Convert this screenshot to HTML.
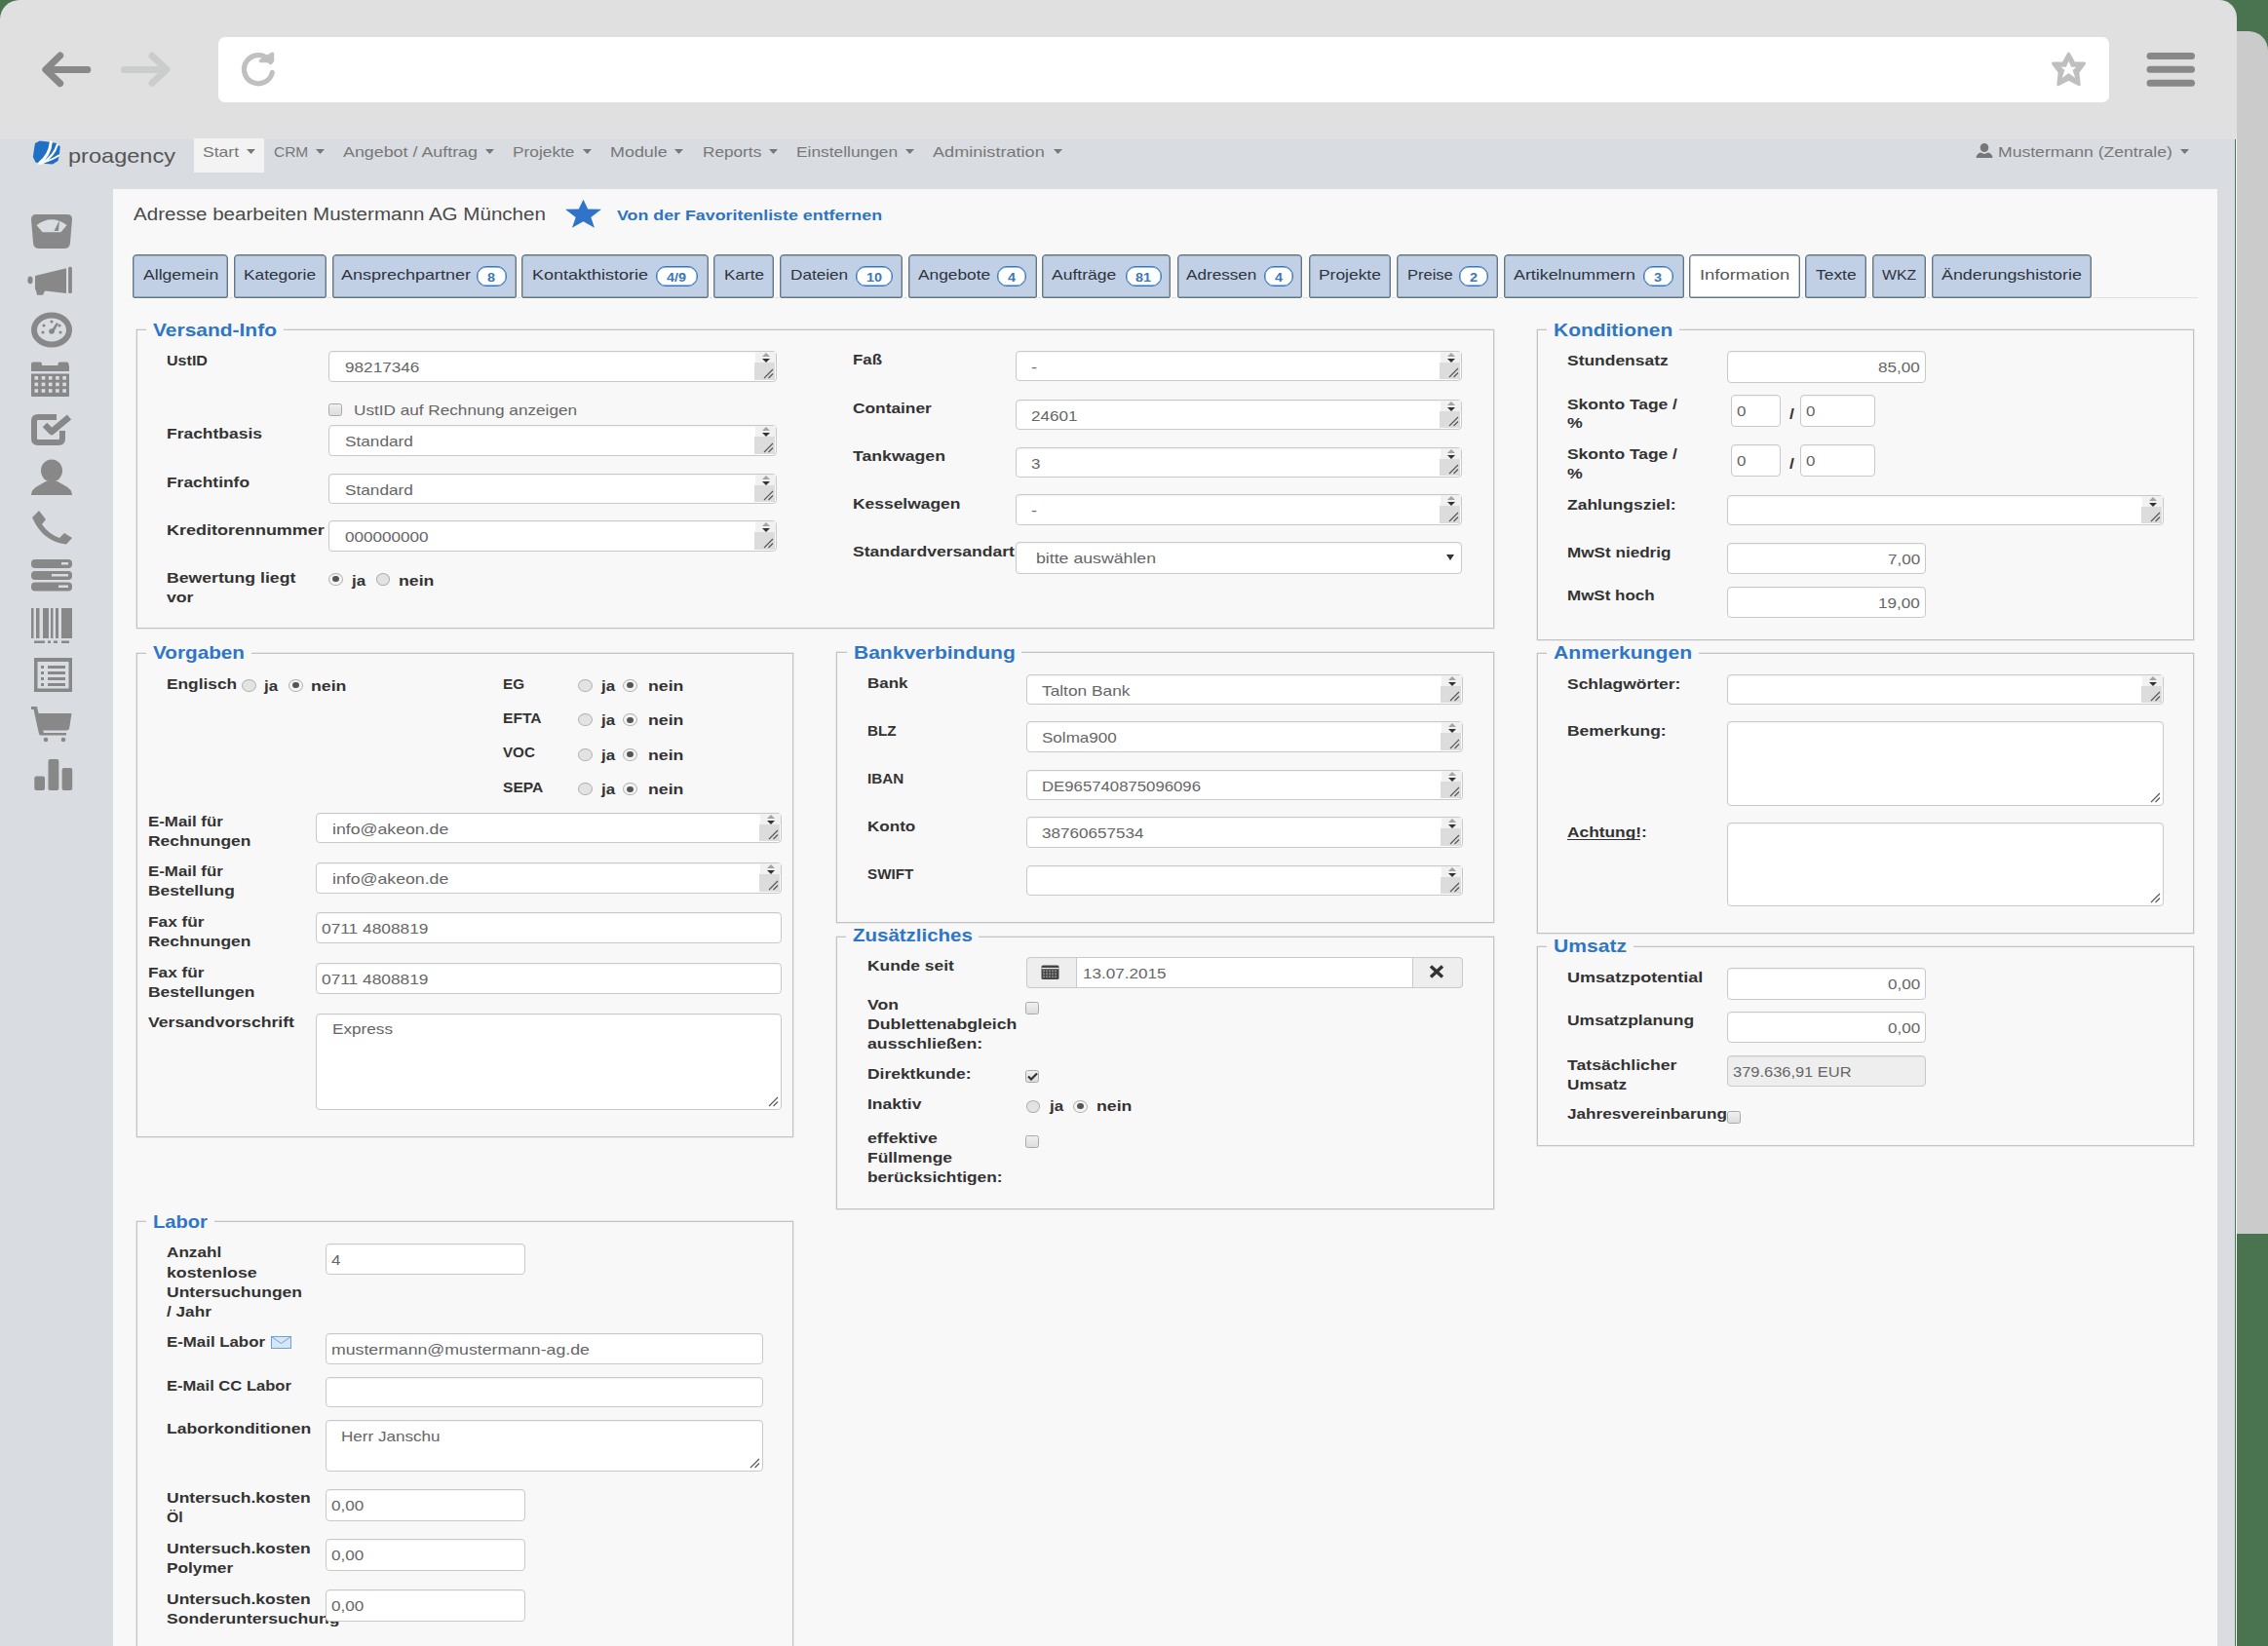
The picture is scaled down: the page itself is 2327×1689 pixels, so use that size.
<!DOCTYPE html><html><head><meta charset="utf-8"><style>
html,body{margin:0;padding:0;width:2327px;height:1689px;overflow:hidden;background:#4a7350}
body{position:relative;font-family:"Liberation Sans",sans-serif}
.t{position:absolute;white-space:nowrap;transform-origin:0 0}
</style></head><body>
<div style="position:absolute;left:0;top:0;width:2327px;height:1689px;background:#4a7350"></div>
<div style="position:absolute;left:2200px;top:32px;width:127px;height:1234px;background:#cbcbcb;border-top-right-radius:20px"></div>
<div style="position:absolute;left:0;top:0;width:2295px;height:1689px;background:#e0e0e0;border-top-left-radius:20px;border-top-right-radius:18px"></div>
<div style="position:absolute;left:0px;top:143px;width:2293px;height:1546px;background:#d9dce1"></div>
<div style="position:absolute;left:2293px;top:143px;width:1px;height:1546px;background:#4a7350"></div>
<div style="position:absolute;left:2294px;top:143px;width:1px;height:1546px;background:#f4f4f4"></div>
<div style="position:absolute;left:224px;top:38px;width:1940px;height:67px;background:#fff;border-radius:7px"></div>
<svg style="position:absolute;left:0;top:0" width="2327" height="143">
<g fill="none" stroke-linecap="round" stroke-linejoin="round">
<path d="M89.8,71.4 H48 M61.7,57 L46.8,71.4 L61.7,85.6" stroke="#888" stroke-width="7"/>
<path d="M127.5,71.4 H170 M156,57.3 L171,71.4 L156,85.3" stroke="#cbcccc" stroke-width="7"/>
<path d="M277.5,63.5 A14.6,14.6 0 1 0 279.3,74.5" stroke="#c0c0c0" stroke-width="5.2"/>
</g>
<path d="M267.5,62.5 L279.5,62.5 L279.5,55.2 Z" fill="#c0c0c0" stroke="#c0c0c0" stroke-width="3.5" stroke-linejoin="round"/>
<path d="M2122.5,55 L2127.8,64.8 L2138.5,65 L2131.8,74 L2133.2,86.6 L2122.5,81.2 L2111.8,86.6 L2113.2,74 L2106.5,65 L2117.2,64.8 Z" fill="#bfbfbf" stroke="#bfbfbf" stroke-width="3" stroke-linejoin="round"/>
<path d="M2122.5,62.7 L2125.1,68.7 L2130.4,68.7 L2126.6,71.9 L2129.3,80.1 L2122.5,75.1 L2115.7,80.1 L2118.4,71.9 L2114.6,68.7 L2119.9,68.7 Z" fill="#fff"/>
<rect x="2202.5" y="54" width="49.5" height="7" rx="3.5" fill="#888"/>
<rect x="2202.5" y="67.7" width="49.5" height="7" rx="3.5" fill="#888"/>
<rect x="2202.5" y="81.7" width="49.5" height="7" rx="3.5" fill="#888"/>
</svg>
<svg style="position:absolute;left:28px;top:140px" width="40" height="34" viewBox="0 0 40 34">
<path d="M8,7 L13,4.6 L23,5.8 L30,7 L33.8,10.5 L32.5,21 L31.5,25 L26,28.6 L12,27.5 L8.5,26.5 L5.8,21 Z" fill="#1f70c4"/>
<g fill="none" stroke="#fff" stroke-linecap="round">
<path d="M24.3,6 C23.5,14 19.5,22 12.5,27.5" stroke-width="3"/>
<path d="M30.8,8.5 C28.5,16 23.5,22.5 15.5,27.2" stroke-width="2.3"/>
<path d="M32.3,19.5 C28,22.5 22,25 14.5,27.3" stroke-width="2.1"/>
</g>
</svg>
<div class="t" style="left:70.20px;top:148px;font-size:21px;line-height:23px;font-weight:normal;color:#555;transform:scaleX(1.1216);">proagency</div>
<div style="position:absolute;left:199px;top:142px;width:72px;height:34.5px;background:#f3f3f3"></div>
<div class="t" style="left:208.00px;top:147px;font-size:15px;line-height:17px;font-weight:normal;color:#777;transform:scaleX(1.1690);">Start</div>
<svg style="position:absolute;left:253px;top:153px" width="9" height="5"><path d="M0,0 H9 L4.5,5Z" fill="#777"/></svg>
<div class="t" style="left:280.70px;top:147px;font-size:15px;line-height:17px;font-weight:normal;color:#777;transform:scaleX(1.0322);">CRM</div>
<svg style="position:absolute;left:323.5px;top:153px" width="9" height="5"><path d="M0,0 H9 L4.5,5Z" fill="#777"/></svg>
<div class="t" style="left:352.00px;top:147px;font-size:15px;line-height:17px;font-weight:normal;color:#777;transform:scaleX(1.1902);">Angebot / Auftrag</div>
<svg style="position:absolute;left:497.6px;top:153px" width="9" height="5"><path d="M0,0 H9 L4.5,5Z" fill="#777"/></svg>
<div class="t" style="left:526.00px;top:147px;font-size:15px;line-height:17px;font-weight:normal;color:#777;transform:scaleX(1.1535);">Projekte</div>
<svg style="position:absolute;left:598px;top:153px" width="9" height="5"><path d="M0,0 H9 L4.5,5Z" fill="#777"/></svg>
<div class="t" style="left:626.00px;top:147px;font-size:15px;line-height:17px;font-weight:normal;color:#777;transform:scaleX(1.1951);">Module</div>
<svg style="position:absolute;left:692px;top:153px" width="9" height="5"><path d="M0,0 H9 L4.5,5Z" fill="#777"/></svg>
<div class="t" style="left:720.80px;top:147px;font-size:15px;line-height:17px;font-weight:normal;color:#777;transform:scaleX(1.1467);">Reports</div>
<svg style="position:absolute;left:789px;top:153px" width="9" height="5"><path d="M0,0 H9 L4.5,5Z" fill="#777"/></svg>
<div class="t" style="left:817.00px;top:147px;font-size:15px;line-height:17px;font-weight:normal;color:#777;transform:scaleX(1.1556);">Einstellungen</div>
<svg style="position:absolute;left:929.4px;top:153px" width="9" height="5"><path d="M0,0 H9 L4.5,5Z" fill="#777"/></svg>
<div class="t" style="left:957.00px;top:147px;font-size:15px;line-height:17px;font-weight:normal;color:#777;transform:scaleX(1.2072);">Administration</div>
<svg style="position:absolute;left:1080.7px;top:153px" width="9" height="5"><path d="M0,0 H9 L4.5,5Z" fill="#777"/></svg>
<svg style="position:absolute;left:2027px;top:147px" width="18" height="15" viewBox="0 0 18 15">
<ellipse cx="9" cy="4.5" rx="4.3" ry="4.5" fill="#777"/><path d="M0.5,15 Q1,10.5 5,9.5 L9,11 L13,9.5 Q17,10.5 17.5,15Z" fill="#777"/></svg>
<div class="t" style="left:2049.70px;top:147px;font-size:15px;line-height:17px;font-weight:normal;color:#777;transform:scaleX(1.1727);">Mustermann (Zentrale)</div>
<svg style="position:absolute;left:2237px;top:153px" width="9" height="5"><path d="M0,0 H9 L4.5,5Z" fill="#777"/></svg>
<svg style="position:absolute;left:0;top:200px" width="116" height="620" viewBox="0 200 116 620">
<g fill="#888">
<path d="M37,220 H69 Q74,220 74,225 L72,249 Q71.5,255 66,255 H40 Q34.5,255 34,249 L32,225 Q32,220 37,220Z"/>
<path d="M37.5,231 Q53,219.5 68.6,231 L62.5,238.2 H43.6 Z" fill="#d9dce1"/>
<path d="M55.5,237 L61,226 L60,237Z"/>
<ellipse cx="31" cy="287.4" rx="2.6" ry="3.8"/>
<path d="M36,283 L68,275.3 L68,301 L36,297.3Z"/>
<path d="M36.5,296 L46.5,297.5 L44,302.8 L38,302.8Z"/>
<rect x="70.1" y="273.8" width="3.8" height="27.3" rx="1.5"/>
<ellipse cx="53" cy="338.5" rx="18" ry="15" fill="none" stroke="#888" stroke-width="6"/>
<circle cx="53" cy="340" r="2.8"/><path d="M52,340 L58,331 L60,332 L55,341Z"/>
<circle cx="45" cy="334" r="1.6"/><circle cx="53" cy="330" r="1.6"/><circle cx="61" cy="334" r="1.6"/><circle cx="44" cy="341" r="1.6"/><circle cx="62" cy="341" r="1.6"/>
<rect x="32" y="375" width="39" height="32" rx="1"/>
<rect x="32" y="371.5" width="11" height="6" rx="2"/><rect x="59.5" y="371.5" width="11" height="6" rx="2"/>
</g>
<g fill="#d9dce1">
<rect x="32" y="381" width="39" height="2.5"/>
<rect x="35.5" y="386.0" width="3.6" height="3.6"/><rect x="42.7" y="386.0" width="3.6" height="3.6"/><rect x="49.9" y="386.0" width="3.6" height="3.6"/><rect x="57.1" y="386.0" width="3.6" height="3.6"/><rect x="64.3" y="386.0" width="3.6" height="3.6"/><rect x="35.5" y="392.6" width="3.6" height="3.6"/><rect x="42.7" y="392.6" width="3.6" height="3.6"/><rect x="49.9" y="392.6" width="3.6" height="3.6"/><rect x="57.1" y="392.6" width="3.6" height="3.6"/><rect x="64.3" y="392.6" width="3.6" height="3.6"/><rect x="35.5" y="399.2" width="3.6" height="3.6"/><rect x="42.7" y="399.2" width="3.6" height="3.6"/><rect x="49.9" y="399.2" width="3.6" height="3.6"/><rect x="57.1" y="399.2" width="3.6" height="3.6"/><rect x="64.3" y="399.2" width="3.6" height="3.6"/>
</g>
<g fill="none" stroke="#888" stroke-width="6" stroke-linejoin="round">
<path d="M64,442 V450 Q64,454 60,454 H39 Q35,454 35,450 V432 Q35,428 39,428 H58"/>
<path d="M46,436 L53,443 L71,428" stroke-width="6.5"/>
</g>
<g fill="#888">
<ellipse cx="53" cy="483" rx="11" ry="11.5"/>
<path d="M32,508 Q32,502 40,498 L47,494 H59 L66,498 Q74,502 74,508Z"/>
<path d="M33,531 L40,524 L47,533 L43,538 Q50,548 61,552 L66,547 L74,552 L68,558.5 Q44,556 33,531Z"/>
<rect x="32" y="574" width="42" height="9" rx="4"/><rect x="32" y="586" width="42" height="9" rx="4"/><rect x="32" y="597.5" width="42" height="9" rx="4"/>
</g>
<g fill="#d9dce1"><rect x="63" y="577" width="7" height="2.5"/><rect x="53" y="589" width="17" height="2.5"/><rect x="60" y="600.5" width="10" height="2.5"/></g>
<g fill="#888">
<rect x="32" y="624" width="2.5" height="31"/><rect x="37" y="624" width="3.5" height="31"/><rect x="44" y="624" width="6" height="31"/><rect x="52" y="624" width="2.5" height="31"/><rect x="57" y="624" width="3" height="31"/><rect x="63" y="624" width="11" height="31"/>
<rect x="35" y="657.5" width="11" height="2.5"/><rect x="49" y="657.5" width="3" height="2.5"/><rect x="55" y="657.5" width="4" height="2.5"/><rect x="63" y="657.5" width="8" height="2.5"/>
<path d="M35,675 H74 V710 H35Z M38.5,679 V706.5 H70.5 V679Z" fill-rule="evenodd"/>
<rect x="42" y="683" width="3" height="3"/><rect x="49" y="683" width="18" height="3"/>
<rect x="42" y="689" width="3" height="3"/><rect x="49" y="689" width="18" height="3"/>
<rect x="42" y="695" width="3" height="3"/><rect x="49" y="695" width="18" height="3"/>
<rect x="42" y="701" width="3" height="3"/><rect x="49" y="701" width="18" height="3"/>
<path d="M32,725 H38 L39.5,732 H73.5 L71,748 Q70,749.5 68,749.5 H44 L45,752 H68 V754.5 H42 Q40.5,754.5 40,753 L34.5,728 H32Z"/>
<circle cx="47" cy="759" r="2.3"/><circle cx="65" cy="759" r="2.3"/>
<rect x="35.3" y="796.5" width="10.7" height="14.5" rx="2"/><rect x="49.5" y="779" width="10.8" height="32" rx="2"/><rect x="63.6" y="788" width="10.6" height="23" rx="2"/>
</g>
</svg>
<div style="position:absolute;left:116px;top:194px;width:2159px;height:1495px;background:#f8f8f8"></div>
<div class="t" style="left:137.00px;top:210px;font-size:18px;line-height:20px;font-weight:normal;color:#4a4a4a;transform:scaleX(1.1424);">Adresse bearbeiten Mustermann AG München</div>
<svg style="position:absolute;left:578px;top:204px" width="40" height="32" viewBox="0 0 40 32">
<path d="M20.5,0.8 L25.2,10.6 L39,10.8 L28.3,19 L32,29.8 L20.5,23.2 L9,29.8 L12.7,19 L2,10.8 L15.8,10.6Z" fill="#2f74c8"/></svg>
<div class="t" style="left:633.00px;top:212px;font-size:15px;line-height:17px;font-weight:bold;color:#2f74c0;transform:scaleX(1.1883);">Von der Favoritenliste entfernen</div>
<div style="position:absolute;left:136px;top:305px;width:2119px;height:1px;background:#dedede"></div>
<div style="position:absolute;left:136px;top:261px;width:96px;height:43px;background:#c1d0e5;border:1px solid #62768a;border-radius:4px 4px 2px 2px;box-shadow:0 0 0 1px #fff, inset 0 0 0 0.4px #62768a"></div>
<div class="t" style="left:147.00px;top:273px;font-size:15px;line-height:17px;font-weight:normal;color:#2d3440;transform:scaleX(1.1724);">Allgemein</div>
<div style="position:absolute;left:240px;top:261px;width:93px;height:43px;background:#c1d0e5;border:1px solid #62768a;border-radius:4px 4px 2px 2px;box-shadow:0 0 0 1px #fff, inset 0 0 0 0.4px #62768a"></div>
<div class="t" style="left:250.00px;top:273px;font-size:15px;line-height:17px;font-weight:normal;color:#2d3440;transform:scaleX(1.1526);">Kategorie</div>
<div style="position:absolute;left:341px;top:261px;width:187px;height:43px;background:#c1d0e5;border:1px solid #62768a;border-radius:4px 4px 2px 2px;box-shadow:0 0 0 1px #fff, inset 0 0 0 0.4px #62768a"></div>
<div class="t" style="left:350.00px;top:273px;font-size:15px;line-height:17px;font-weight:normal;color:#2d3440;transform:scaleX(1.1998);">Ansprechpartner</div>
<div style="position:absolute;left:489.0px;top:272.5px;width:29.0px;height:19px;background:#fff;border:1px solid #3576bb;border-radius:10px;box-shadow:inset 0 0 0 0.4px #3576bb"></div>
<div class="t" style="left:500.48px;top:278px;font-size:12.5px;line-height:14px;font-weight:bold;color:#3a78b8;transform:scaleX(1.1500);">8</div>
<div style="position:absolute;left:535px;top:261px;width:190px;height:43px;background:#c1d0e5;border:1px solid #62768a;border-radius:4px 4px 2px 2px;box-shadow:0 0 0 1px #fff, inset 0 0 0 0.4px #62768a"></div>
<div class="t" style="left:545.50px;top:273px;font-size:15px;line-height:17px;font-weight:normal;color:#2d3440;transform:scaleX(1.1992);">Kontakthistorie</div>
<div style="position:absolute;left:672.5px;top:272.5px;width:41.7px;height:19px;background:#fff;border:1px solid #3576bb;border-radius:10px;box-shadow:inset 0 0 0 0.4px #3576bb"></div>
<div class="t" style="left:684.36px;top:278px;font-size:12.5px;line-height:14px;font-weight:bold;color:#3a78b8;transform:scaleX(1.1500);">4/9</div>
<div style="position:absolute;left:732px;top:261px;width:60px;height:43px;background:#c1d0e5;border:1px solid #62768a;border-radius:4px 4px 2px 2px;box-shadow:0 0 0 1px #fff, inset 0 0 0 0.4px #62768a"></div>
<div class="t" style="left:742.70px;top:273px;font-size:15px;line-height:17px;font-weight:normal;color:#2d3440;transform:scaleX(1.1409);">Karte</div>
<div style="position:absolute;left:800px;top:261px;width:124px;height:43px;background:#c1d0e5;border:1px solid #62768a;border-radius:4px 4px 2px 2px;box-shadow:0 0 0 1px #fff, inset 0 0 0 0.4px #62768a"></div>
<div class="t" style="left:810.80px;top:273px;font-size:15px;line-height:17px;font-weight:normal;color:#2d3440;transform:scaleX(1.1440);">Dateien</div>
<div style="position:absolute;left:877.8px;top:272.5px;width:36.1px;height:19px;background:#fff;border:1px solid #3576bb;border-radius:10px;box-shadow:inset 0 0 0 0.4px #3576bb"></div>
<div class="t" style="left:888.87px;top:278px;font-size:12.5px;line-height:14px;font-weight:bold;color:#3a78b8;transform:scaleX(1.1500);">10</div>
<div style="position:absolute;left:932px;top:261px;width:130px;height:43px;background:#c1d0e5;border:1px solid #62768a;border-radius:4px 4px 2px 2px;box-shadow:0 0 0 1px #fff, inset 0 0 0 0.4px #62768a"></div>
<div class="t" style="left:941.90px;top:273px;font-size:15px;line-height:17px;font-weight:normal;color:#2d3440;transform:scaleX(1.1542);">Angebote</div>
<div style="position:absolute;left:1023.4px;top:272.5px;width:27.9px;height:19px;background:#fff;border:1px solid #3576bb;border-radius:10px;box-shadow:inset 0 0 0 0.4px #3576bb"></div>
<div class="t" style="left:1034.32px;top:278px;font-size:12.5px;line-height:14px;font-weight:bold;color:#3a78b8;transform:scaleX(1.1500);">4</div>
<div style="position:absolute;left:1069px;top:261px;width:130px;height:43px;background:#c1d0e5;border:1px solid #62768a;border-radius:4px 4px 2px 2px;box-shadow:0 0 0 1px #fff, inset 0 0 0 0.4px #62768a"></div>
<div class="t" style="left:1079.40px;top:273px;font-size:15px;line-height:17px;font-weight:normal;color:#2d3440;transform:scaleX(1.1693);">Aufträge</div>
<div style="position:absolute;left:1154.6px;top:272.5px;width:35.0px;height:19px;background:#fff;border:1px solid #3576bb;border-radius:10px;box-shadow:inset 0 0 0 0.4px #3576bb"></div>
<div class="t" style="left:1165.12px;top:278px;font-size:12.5px;line-height:14px;font-weight:bold;color:#3a78b8;transform:scaleX(1.1500);">81</div>
<div style="position:absolute;left:1208px;top:261px;width:126px;height:43px;background:#c1d0e5;border:1px solid #62768a;border-radius:4px 4px 2px 2px;box-shadow:0 0 0 1px #fff, inset 0 0 0 0.4px #62768a"></div>
<div class="t" style="left:1217.40px;top:273px;font-size:15px;line-height:17px;font-weight:normal;color:#2d3440;transform:scaleX(1.1422);">Adressen</div>
<div style="position:absolute;left:1297.4px;top:272.5px;width:27.3px;height:19px;background:#fff;border:1px solid #3576bb;border-radius:10px;box-shadow:inset 0 0 0 0.4px #3576bb"></div>
<div class="t" style="left:1308.03px;top:278px;font-size:12.5px;line-height:14px;font-weight:bold;color:#3a78b8;transform:scaleX(1.1500);">4</div>
<div style="position:absolute;left:1343px;top:261px;width:82px;height:43px;background:#c1d0e5;border:1px solid #62768a;border-radius:4px 4px 2px 2px;box-shadow:0 0 0 1px #fff, inset 0 0 0 0.4px #62768a"></div>
<div class="t" style="left:1352.80px;top:273px;font-size:15px;line-height:17px;font-weight:normal;color:#2d3440;transform:scaleX(1.1608);">Projekte</div>
<div style="position:absolute;left:1433px;top:261px;width:102px;height:43px;background:#c1d0e5;border:1px solid #62768a;border-radius:4px 4px 2px 2px;box-shadow:0 0 0 1px #fff, inset 0 0 0 0.4px #62768a"></div>
<div class="t" style="left:1443.80px;top:273px;font-size:15px;line-height:17px;font-weight:normal;color:#2d3440;transform:scaleX(1.0978);">Preise</div>
<div style="position:absolute;left:1497.4px;top:272.5px;width:27.3px;height:19px;background:#fff;border:1px solid #3576bb;border-radius:10px;box-shadow:inset 0 0 0 0.4px #3576bb"></div>
<div class="t" style="left:1508.03px;top:278px;font-size:12.5px;line-height:14px;font-weight:bold;color:#3a78b8;transform:scaleX(1.1500);">2</div>
<div style="position:absolute;left:1543px;top:261px;width:183px;height:43px;background:#c1d0e5;border:1px solid #62768a;border-radius:4px 4px 2px 2px;box-shadow:0 0 0 1px #fff, inset 0 0 0 0.4px #62768a"></div>
<div class="t" style="left:1553.20px;top:273px;font-size:15px;line-height:17px;font-weight:normal;color:#2d3440;transform:scaleX(1.1886);">Artikelnummern</div>
<div style="position:absolute;left:1686.0px;top:272.5px;width:29.0px;height:19px;background:#fff;border:1px solid #3576bb;border-radius:10px;box-shadow:inset 0 0 0 0.4px #3576bb"></div>
<div class="t" style="left:1697.47px;top:278px;font-size:12.5px;line-height:14px;font-weight:bold;color:#3a78b8;transform:scaleX(1.1500);">3</div>
<div style="position:absolute;left:1733px;top:261px;width:112px;height:43px;background:#fff;border:1px solid #62768a;border-radius:4px 4px 2px 2px;box-shadow:0 0 0 1px #fff, inset 0 0 0 0.4px #62768a"></div>
<div class="t" style="left:1744.20px;top:273px;font-size:15px;line-height:17px;font-weight:normal;color:#555;transform:scaleX(1.2280);">Information</div>
<div style="position:absolute;left:1852px;top:261px;width:61px;height:43px;background:#c1d0e5;border:1px solid #62768a;border-radius:4px 4px 2px 2px;box-shadow:0 0 0 1px #fff, inset 0 0 0 0.4px #62768a"></div>
<div class="t" style="left:1863.00px;top:273px;font-size:15px;line-height:17px;font-weight:normal;color:#2d3440;transform:scaleX(1.1604);">Texte</div>
<div style="position:absolute;left:1921px;top:261px;width:53px;height:43px;background:#c1d0e5;border:1px solid #62768a;border-radius:4px 4px 2px 2px;box-shadow:0 0 0 1px #fff, inset 0 0 0 0.4px #62768a"></div>
<div class="t" style="left:1930.90px;top:273px;font-size:15px;line-height:17px;font-weight:normal;color:#2d3440;transform:scaleX(1.0541);">WKZ</div>
<div style="position:absolute;left:1982px;top:261px;width:162px;height:43px;background:#c1d0e5;border:1px solid #62768a;border-radius:4px 4px 2px 2px;box-shadow:0 0 0 1px #fff, inset 0 0 0 0.4px #62768a"></div>
<div class="t" style="left:1992.20px;top:273px;font-size:15px;line-height:17px;font-weight:normal;color:#2d3440;transform:scaleX(1.1894);">Änderungshistorie</div>
<div style="position:absolute;left:140px;top:338px;width:1391px;height:305px;border:1px solid #c4c4c4;box-shadow:0 0 0 0.5px #d8d8d8"></div>
<div style="position:absolute;left:150px;top:335px;width:141px;height:7px;background:#f8f8f8"></div>
<div class="t" style="left:157.00px;top:328px;font-size:18.5px;line-height:21px;font-weight:bold;color:#2f76c6;transform:scaleX(1.1328);">Versand-Info</div>
<div class="t" style="left:171.00px;top:361.4px;font-size:15px;line-height:17px;font-weight:bold;color:#333;transform:scaleX(1.0707);">UstID</div>
<div class="t" style="left:171.00px;top:436.4px;font-size:15px;line-height:17px;font-weight:bold;color:#333;transform:scaleX(1.1633);">Frachtbasis</div>
<div class="t" style="left:171.00px;top:486px;font-size:15px;line-height:17px;font-weight:bold;color:#333;transform:scaleX(1.1596);">Frachtinfo</div>
<div class="t" style="left:171.00px;top:534.6px;font-size:15px;line-height:17px;font-weight:bold;color:#333;transform:scaleX(1.1985);">Kreditorennummer</div>
<div class="t" style="left:171.00px;top:584px;font-size:15px;line-height:17px;font-weight:bold;color:#333;transform:scaleX(1.1760);">Bewertung liegt</div>
<div class="t" style="left:171.00px;top:604px;font-size:15px;line-height:17px;font-weight:bold;color:#333;transform:scaleX(1.1780);">vor</div>
<div style="position:absolute;left:337px;top:360px;width:458px;height:30px;background:#fff;border:1px solid #c9c9c9;border-radius:4px;box-shadow:inset 0 1px 1px rgba(0,0,0,.05)"></div>
<div style="position:absolute;left:775px;top:361px;width:21px;height:11px;background:#f1f1f1"></div>
<svg style="position:absolute;left:782px;top:362px" width="8" height="10"><path d="M0,4 L4,0 L8,4Z" fill="#a3a3a3"/><path d="M0,6 L8,6 L4,10Z" fill="#333"/></svg>
<div style="position:absolute;left:774px;top:372px;width:21px;height:18px;background:#dcdcdc"></div>
<svg style="position:absolute;left:783px;top:378px" width="11" height="11"><path d="M1,10 L10,1 M5.5,10 L10,5.5" stroke="#555" stroke-width="1.1"/></svg>
<div class="t" style="left:353.50px;top:368.5px;font-size:14.5px;line-height:16px;font-weight:normal;color:#666;transform:scaleX(1.1840);">98217346</div>
<div style="position:absolute;left:336.8px;top:414.0px;width:12px;height:10.5px;background:linear-gradient(#f0f0f0,#dcdcdc);border:1px solid #a9a9a9;border-radius:2.5px"></div>
<div class="t" style="left:363.00px;top:412.7px;font-size:14.5px;line-height:16px;font-weight:normal;color:#666;transform:scaleX(1.1839);">UstID auf Rechnung anzeigen</div>
<div style="position:absolute;left:337px;top:436px;width:458px;height:30px;background:#fff;border:1px solid #c9c9c9;border-radius:4px;box-shadow:inset 0 1px 1px rgba(0,0,0,.05)"></div>
<div style="position:absolute;left:775px;top:437px;width:21px;height:11px;background:#f1f1f1"></div>
<svg style="position:absolute;left:782px;top:438px" width="8" height="10"><path d="M0,4 L4,0 L8,4Z" fill="#a3a3a3"/><path d="M0,6 L8,6 L4,10Z" fill="#333"/></svg>
<div style="position:absolute;left:774px;top:448px;width:21px;height:18px;background:#dcdcdc"></div>
<svg style="position:absolute;left:783px;top:454px" width="11" height="11"><path d="M1,10 L10,1 M5.5,10 L10,5.5" stroke="#555" stroke-width="1.1"/></svg>
<div class="t" style="left:353.50px;top:444.5px;font-size:14.5px;line-height:16px;font-weight:normal;color:#666;transform:scaleX(1.1866);">Standard</div>
<div style="position:absolute;left:337px;top:486px;width:458px;height:29px;background:#fff;border:1px solid #c9c9c9;border-radius:4px;box-shadow:inset 0 1px 1px rgba(0,0,0,.05)"></div>
<div style="position:absolute;left:775px;top:487px;width:21px;height:11px;background:#f1f1f1"></div>
<svg style="position:absolute;left:782px;top:488px" width="8" height="10"><path d="M0,4 L4,0 L8,4Z" fill="#a3a3a3"/><path d="M0,6 L8,6 L4,10Z" fill="#333"/></svg>
<div style="position:absolute;left:774px;top:498px;width:21px;height:17px;background:#dcdcdc"></div>
<svg style="position:absolute;left:783px;top:503px" width="11" height="11"><path d="M1,10 L10,1 M5.5,10 L10,5.5" stroke="#555" stroke-width="1.1"/></svg>
<div class="t" style="left:353.50px;top:494.5px;font-size:14.5px;line-height:16px;font-weight:normal;color:#666;transform:scaleX(1.1866);">Standard</div>
<div style="position:absolute;left:337px;top:534px;width:458px;height:30px;background:#fff;border:1px solid #c9c9c9;border-radius:4px;box-shadow:inset 0 1px 1px rgba(0,0,0,.05)"></div>
<div style="position:absolute;left:775px;top:535px;width:21px;height:11px;background:#f1f1f1"></div>
<svg style="position:absolute;left:782px;top:536px" width="8" height="10"><path d="M0,4 L4,0 L8,4Z" fill="#a3a3a3"/><path d="M0,6 L8,6 L4,10Z" fill="#333"/></svg>
<div style="position:absolute;left:774px;top:546px;width:21px;height:18px;background:#dcdcdc"></div>
<svg style="position:absolute;left:783px;top:552px" width="11" height="11"><path d="M1,10 L10,1 M5.5,10 L10,5.5" stroke="#555" stroke-width="1.1"/></svg>
<div class="t" style="left:353.50px;top:542.5px;font-size:14.5px;line-height:16px;font-weight:normal;color:#666;transform:scaleX(1.1791);">000000000</div>
<div style="position:absolute;left:337.4px;top:588.0px;width:12.5px;height:11px;background:#f4f4f4;border:1px solid #b0b0b0;border-radius:50%"></div>
<div style="position:absolute;left:341.4px;top:591.3px;width:6.5px;height:6px;background:#555;border-radius:50%"></div>
<div class="t" style="left:361.34px;top:587px;font-size:15px;line-height:17px;font-weight:bold;color:#333;transform:scaleX(1.1320);">ja</div>
<div style="position:absolute;left:385.5px;top:588.0px;width:12.5px;height:11px;background:#e3e3e3;border:1px solid #b0b0b0;border-radius:50%"></div>
<div class="t" style="left:409.00px;top:587px;font-size:15px;line-height:17px;font-weight:bold;color:#333;transform:scaleX(1.1784);">nein</div>
<div class="t" style="left:875.00px;top:360.4px;font-size:15px;line-height:17px;font-weight:bold;color:#333;transform:scaleX(1.1218);">Faß</div>
<div class="t" style="left:875.00px;top:410.3px;font-size:15px;line-height:17px;font-weight:bold;color:#333;transform:scaleX(1.1542);">Container</div>
<div class="t" style="left:875.00px;top:459px;font-size:15px;line-height:17px;font-weight:bold;color:#333;transform:scaleX(1.1785);">Tankwagen</div>
<div class="t" style="left:875.00px;top:508.4px;font-size:15px;line-height:17px;font-weight:bold;color:#333;transform:scaleX(1.1611);">Kesselwagen</div>
<div class="t" style="left:875.00px;top:556.7px;font-size:15px;line-height:17px;font-weight:bold;color:#333;transform:scaleX(1.1711);">Standardversandart</div>
<div style="position:absolute;left:1042px;top:360px;width:456px;height:29px;background:#fff;border:1px solid #c9c9c9;border-radius:4px;box-shadow:inset 0 1px 1px rgba(0,0,0,.05)"></div>
<div style="position:absolute;left:1478px;top:361px;width:21px;height:11px;background:#f1f1f1"></div>
<svg style="position:absolute;left:1485px;top:362px" width="8" height="10"><path d="M0,4 L4,0 L8,4Z" fill="#a3a3a3"/><path d="M0,6 L8,6 L4,10Z" fill="#333"/></svg>
<div style="position:absolute;left:1477px;top:372px;width:21px;height:17px;background:#dcdcdc"></div>
<svg style="position:absolute;left:1486px;top:377px" width="11" height="11"><path d="M1,10 L10,1 M5.5,10 L10,5.5" stroke="#555" stroke-width="1.1"/></svg>
<div class="t" style="left:1058.00px;top:368.5px;font-size:14.5px;line-height:16px;font-weight:normal;color:#666;transform:scaleX(1.2320);">-</div>
<div style="position:absolute;left:1042px;top:410px;width:456px;height:29px;background:#fff;border:1px solid #c9c9c9;border-radius:4px;box-shadow:inset 0 1px 1px rgba(0,0,0,.05)"></div>
<div style="position:absolute;left:1478px;top:411px;width:21px;height:11px;background:#f1f1f1"></div>
<svg style="position:absolute;left:1485px;top:412px" width="8" height="10"><path d="M0,4 L4,0 L8,4Z" fill="#a3a3a3"/><path d="M0,6 L8,6 L4,10Z" fill="#333"/></svg>
<div style="position:absolute;left:1477px;top:422px;width:21px;height:17px;background:#dcdcdc"></div>
<svg style="position:absolute;left:1486px;top:427px" width="11" height="11"><path d="M1,10 L10,1 M5.5,10 L10,5.5" stroke="#555" stroke-width="1.1"/></svg>
<div class="t" style="left:1058.00px;top:418.5px;font-size:14.5px;line-height:16px;font-weight:normal;color:#666;transform:scaleX(1.1782);">24601</div>
<div style="position:absolute;left:1042px;top:459px;width:456px;height:29px;background:#fff;border:1px solid #c9c9c9;border-radius:4px;box-shadow:inset 0 1px 1px rgba(0,0,0,.05)"></div>
<div style="position:absolute;left:1478px;top:460px;width:21px;height:11px;background:#f1f1f1"></div>
<svg style="position:absolute;left:1485px;top:461px" width="8" height="10"><path d="M0,4 L4,0 L8,4Z" fill="#a3a3a3"/><path d="M0,6 L8,6 L4,10Z" fill="#333"/></svg>
<div style="position:absolute;left:1477px;top:471px;width:21px;height:17px;background:#dcdcdc"></div>
<svg style="position:absolute;left:1486px;top:476px" width="11" height="11"><path d="M1,10 L10,1 M5.5,10 L10,5.5" stroke="#555" stroke-width="1.1"/></svg>
<div class="t" style="left:1058.00px;top:467.5px;font-size:14.5px;line-height:16px;font-weight:normal;color:#666;transform:scaleX(1.1698);">3</div>
<div style="position:absolute;left:1042px;top:507px;width:456px;height:30px;background:#fff;border:1px solid #c9c9c9;border-radius:4px;box-shadow:inset 0 1px 1px rgba(0,0,0,.05)"></div>
<div style="position:absolute;left:1478px;top:508px;width:21px;height:11px;background:#f1f1f1"></div>
<svg style="position:absolute;left:1485px;top:509px" width="8" height="10"><path d="M0,4 L4,0 L8,4Z" fill="#a3a3a3"/><path d="M0,6 L8,6 L4,10Z" fill="#333"/></svg>
<div style="position:absolute;left:1477px;top:519px;width:21px;height:18px;background:#dcdcdc"></div>
<svg style="position:absolute;left:1486px;top:525px" width="11" height="11"><path d="M1,10 L10,1 M5.5,10 L10,5.5" stroke="#555" stroke-width="1.1"/></svg>
<div class="t" style="left:1058.00px;top:515.5px;font-size:14.5px;line-height:16px;font-weight:normal;color:#666;transform:scaleX(1.2320);">-</div>
<div style="position:absolute;left:1042px;top:556px;width:456px;height:31px;background:#fff;border:1px solid #c9c9c9;border-radius:4px;box-shadow:inset 0 1px 1px rgba(0,0,0,.05)"></div>
<div class="t" style="left:1062.70px;top:564.5px;font-size:14.5px;line-height:16px;font-weight:normal;color:#666;transform:scaleX(1.2208);">bitte auswählen</div>
<svg style="position:absolute;left:1484px;top:569px" width="8" height="6"><path d="M0,0 H8 L4,6Z" fill="#333"/></svg>
<div style="position:absolute;left:1577px;top:338px;width:672px;height:317px;border:1px solid #c4c4c4;box-shadow:0 0 0 0.5px #d8d8d8"></div>
<div style="position:absolute;left:1587.3px;top:335px;width:136.20000000000005px;height:7px;background:#f8f8f8"></div>
<div class="t" style="left:1594.30px;top:328px;font-size:18.5px;line-height:21px;font-weight:bold;color:#2f76c6;transform:scaleX(1.1330);">Konditionen</div>
<div class="t" style="left:1608.00px;top:361px;font-size:15px;line-height:17px;font-weight:bold;color:#333;transform:scaleX(1.1630);">Stundensatz</div>
<div class="t" style="left:1608.00px;top:405.5px;font-size:15px;line-height:17px;font-weight:bold;color:#333;transform:scaleX(1.1617);">Skonto Tage /</div>
<div class="t" style="left:1608.00px;top:424.6px;font-size:15px;line-height:17px;font-weight:bold;color:#333;transform:scaleX(1.1800);">%</div>
<div class="t" style="left:1608.00px;top:457.3px;font-size:15px;line-height:17px;font-weight:bold;color:#333;transform:scaleX(1.1617);">Skonto Tage /</div>
<div class="t" style="left:1608.00px;top:476.5px;font-size:15px;line-height:17px;font-weight:bold;color:#333;transform:scaleX(1.1800);">%</div>
<div class="t" style="left:1608.00px;top:508.70000000000005px;font-size:15px;line-height:17px;font-weight:bold;color:#333;transform:scaleX(1.1647);">Zahlungsziel:</div>
<div class="t" style="left:1608.00px;top:557.9px;font-size:15px;line-height:17px;font-weight:bold;color:#333;transform:scaleX(1.1408);">MwSt niedrig</div>
<div class="t" style="left:1608.00px;top:602.3px;font-size:15px;line-height:17px;font-weight:bold;color:#333;transform:scaleX(1.1326);">MwSt hoch</div>
<div style="position:absolute;left:1772px;top:360px;width:202px;height:31px;background:#fff;border:1px solid #c9c9c9;border-radius:4px;box-shadow:inset 0 1px 1px rgba(0,0,0,.05)"></div>
<div class="t" style="left:1927.26px;top:368.5px;font-size:14.5px;line-height:16px;font-weight:normal;color:#666;transform:scaleX(1.1790);">85,00</div>
<div style="position:absolute;left:1776px;top:405px;width:49px;height:31px;background:#fff;border:1px solid #c9c9c9;border-radius:4px;box-shadow:inset 0 1px 1px rgba(0,0,0,.05)"></div>
<div class="t" style="left:1782.20px;top:413.5px;font-size:14.5px;line-height:16px;font-weight:normal;color:#666;transform:scaleX(1.1698);">0</div>
<div class="t" style="left:1836.00px;top:415.6px;font-size:15px;line-height:17px;font-weight:bold;color:#333;transform:scaleX(1.1718);">/</div>
<div style="position:absolute;left:1847px;top:405px;width:75px;height:31px;background:#fff;border:1px solid #c9c9c9;border-radius:4px;box-shadow:inset 0 1px 1px rgba(0,0,0,.05)"></div>
<div class="t" style="left:1852.50px;top:413.5px;font-size:14.5px;line-height:16px;font-weight:normal;color:#666;transform:scaleX(1.1698);">0</div>
<div style="position:absolute;left:1776px;top:456px;width:49px;height:31px;background:#fff;border:1px solid #c9c9c9;border-radius:4px;box-shadow:inset 0 1px 1px rgba(0,0,0,.05)"></div>
<div class="t" style="left:1782.20px;top:464.5px;font-size:14.5px;line-height:16px;font-weight:normal;color:#666;transform:scaleX(1.1698);">0</div>
<div class="t" style="left:1836.00px;top:467px;font-size:15px;line-height:17px;font-weight:bold;color:#333;transform:scaleX(1.1718);">/</div>
<div style="position:absolute;left:1847px;top:456px;width:75px;height:31px;background:#fff;border:1px solid #c9c9c9;border-radius:4px;box-shadow:inset 0 1px 1px rgba(0,0,0,.05)"></div>
<div class="t" style="left:1852.50px;top:464.5px;font-size:14.5px;line-height:16px;font-weight:normal;color:#666;transform:scaleX(1.1698);">0</div>
<div style="position:absolute;left:1772px;top:508px;width:446px;height:29px;background:#fff;border:1px solid #c9c9c9;border-radius:4px;box-shadow:inset 0 1px 1px rgba(0,0,0,.05)"></div>
<div style="position:absolute;left:2198px;top:509px;width:21px;height:11px;background:#f1f1f1"></div>
<svg style="position:absolute;left:2205px;top:510px" width="8" height="10"><path d="M0,4 L4,0 L8,4Z" fill="#a3a3a3"/><path d="M0,6 L8,6 L4,10Z" fill="#333"/></svg>
<div style="position:absolute;left:2197px;top:520px;width:21px;height:17px;background:#dcdcdc"></div>
<svg style="position:absolute;left:2206px;top:525px" width="11" height="11"><path d="M1,10 L10,1 M5.5,10 L10,5.5" stroke="#555" stroke-width="1.1"/></svg>
<div style="position:absolute;left:1772px;top:557px;width:202px;height:30px;background:#fff;border:1px solid #c9c9c9;border-radius:4px;box-shadow:inset 0 1px 1px rgba(0,0,0,.05)"></div>
<div class="t" style="left:1936.76px;top:565.5px;font-size:14.5px;line-height:16px;font-weight:normal;color:#666;transform:scaleX(1.1756);">7,00</div>
<div style="position:absolute;left:1772px;top:602px;width:202px;height:30px;background:#fff;border:1px solid #c9c9c9;border-radius:4px;box-shadow:inset 0 1px 1px rgba(0,0,0,.05)"></div>
<div class="t" style="left:1927.26px;top:610.5px;font-size:14.5px;line-height:16px;font-weight:normal;color:#666;transform:scaleX(1.1790);">19,00</div>
<div style="position:absolute;left:140px;top:670px;width:672px;height:495px;border:1px solid #c4c4c4;box-shadow:0 0 0 0.5px #d8d8d8"></div>
<div style="position:absolute;left:150px;top:667px;width:108px;height:7px;background:#f8f8f8"></div>
<div class="t" style="left:157.00px;top:659.2px;font-size:18.5px;line-height:21px;font-weight:bold;color:#2f76c6;transform:scaleX(1.1192);">Vorgaben</div>
<div class="t" style="left:171.00px;top:692.5px;font-size:15px;line-height:17px;font-weight:bold;color:#333;transform:scaleX(1.1533);">Englisch</div>
<div style="position:absolute;left:248.0px;top:697.0px;width:12.5px;height:11px;background:#e3e3e3;border:1px solid #b0b0b0;border-radius:50%"></div>
<div class="t" style="left:271.34px;top:695px;font-size:15px;line-height:17px;font-weight:bold;color:#333;transform:scaleX(1.1320);">ja</div>
<div style="position:absolute;left:296.0px;top:697.0px;width:12.5px;height:11px;background:#f4f4f4;border:1px solid #b0b0b0;border-radius:50%"></div>
<div style="position:absolute;left:300.0px;top:700.3px;width:6.5px;height:6px;background:#555;border-radius:50%"></div>
<div class="t" style="left:319.00px;top:695px;font-size:15px;line-height:17px;font-weight:bold;color:#333;transform:scaleX(1.1784);">nein</div>
<div class="t" style="left:515.80px;top:692.5px;font-size:15px;line-height:17px;font-weight:bold;color:#333;transform:scaleX(1.0164);">EG</div>
<div style="position:absolute;left:593.0px;top:697.0px;width:12.5px;height:11px;background:#e3e3e3;border:1px solid #b0b0b0;border-radius:50%"></div>
<div class="t" style="left:617.04px;top:695.0px;font-size:15px;line-height:17px;font-weight:bold;color:#333;transform:scaleX(1.1320);">ja</div>
<div style="position:absolute;left:639.0px;top:697.0px;width:12.5px;height:11px;background:#f4f4f4;border:1px solid #b0b0b0;border-radius:50%"></div>
<div style="position:absolute;left:643.0px;top:700.3px;width:6.5px;height:6px;background:#555;border-radius:50%"></div>
<div class="t" style="left:664.60px;top:695.0px;font-size:15px;line-height:17px;font-weight:bold;color:#333;transform:scaleX(1.1784);">nein</div>
<div class="t" style="left:515.80px;top:727.9px;font-size:15px;line-height:17px;font-weight:bold;color:#333;transform:scaleX(1.0412);">EFTA</div>
<div style="position:absolute;left:593.0px;top:732.4px;width:12.5px;height:11px;background:#e3e3e3;border:1px solid #b0b0b0;border-radius:50%"></div>
<div class="t" style="left:617.04px;top:730.4px;font-size:15px;line-height:17px;font-weight:bold;color:#333;transform:scaleX(1.1320);">ja</div>
<div style="position:absolute;left:639.0px;top:732.4px;width:12.5px;height:11px;background:#f4f4f4;border:1px solid #b0b0b0;border-radius:50%"></div>
<div style="position:absolute;left:643.0px;top:735.7px;width:6.5px;height:6px;background:#555;border-radius:50%"></div>
<div class="t" style="left:664.60px;top:730.4px;font-size:15px;line-height:17px;font-weight:bold;color:#333;transform:scaleX(1.1784);">nein</div>
<div class="t" style="left:515.80px;top:763.3px;font-size:15px;line-height:17px;font-weight:bold;color:#333;transform:scaleX(1.0116);">VOC</div>
<div style="position:absolute;left:593.0px;top:767.8px;width:12.5px;height:11px;background:#e3e3e3;border:1px solid #b0b0b0;border-radius:50%"></div>
<div class="t" style="left:617.04px;top:765.8px;font-size:15px;line-height:17px;font-weight:bold;color:#333;transform:scaleX(1.1320);">ja</div>
<div style="position:absolute;left:639.0px;top:767.8px;width:12.5px;height:11px;background:#f4f4f4;border:1px solid #b0b0b0;border-radius:50%"></div>
<div style="position:absolute;left:643.0px;top:771.1px;width:6.5px;height:6px;background:#555;border-radius:50%"></div>
<div class="t" style="left:664.60px;top:765.8px;font-size:15px;line-height:17px;font-weight:bold;color:#333;transform:scaleX(1.1784);">nein</div>
<div class="t" style="left:515.80px;top:798.7px;font-size:15px;line-height:17px;font-weight:bold;color:#333;transform:scaleX(1.0410);">SEPA</div>
<div style="position:absolute;left:593.0px;top:803.2px;width:12.5px;height:11px;background:#e3e3e3;border:1px solid #b0b0b0;border-radius:50%"></div>
<div class="t" style="left:617.04px;top:801.2px;font-size:15px;line-height:17px;font-weight:bold;color:#333;transform:scaleX(1.1320);">ja</div>
<div style="position:absolute;left:639.0px;top:803.2px;width:12.5px;height:11px;background:#f4f4f4;border:1px solid #b0b0b0;border-radius:50%"></div>
<div style="position:absolute;left:643.0px;top:806.5px;width:6.5px;height:6px;background:#555;border-radius:50%"></div>
<div class="t" style="left:664.60px;top:801.2px;font-size:15px;line-height:17px;font-weight:bold;color:#333;transform:scaleX(1.1784);">nein</div>
<div class="t" style="left:151.60px;top:833.5px;font-size:15px;line-height:17px;font-weight:bold;color:#333;transform:scaleX(1.1246);">E-Mail für</div>
<div class="t" style="left:151.60px;top:853.6px;font-size:15px;line-height:17px;font-weight:bold;color:#333;transform:scaleX(1.1600);">Rechnungen</div>
<div style="position:absolute;left:324px;top:834px;width:476px;height:29px;background:#fff;border:1px solid #c9c9c9;border-radius:4px;box-shadow:inset 0 1px 1px rgba(0,0,0,.05)"></div>
<div style="position:absolute;left:780px;top:835px;width:21px;height:11px;background:#f1f1f1"></div>
<svg style="position:absolute;left:787px;top:836px" width="8" height="10"><path d="M0,4 L4,0 L8,4Z" fill="#a3a3a3"/><path d="M0,6 L8,6 L4,10Z" fill="#333"/></svg>
<div style="position:absolute;left:779px;top:846px;width:21px;height:17px;background:#dcdcdc"></div>
<svg style="position:absolute;left:788px;top:851px" width="11" height="11"><path d="M1,10 L10,1 M5.5,10 L10,5.5" stroke="#555" stroke-width="1.1"/></svg>
<div class="t" style="left:340.50px;top:842.5px;font-size:14.5px;line-height:16px;font-weight:normal;color:#666;transform:scaleX(1.2195);">info@akeon.de</div>
<div class="t" style="left:151.60px;top:885.4px;font-size:15px;line-height:17px;font-weight:bold;color:#333;transform:scaleX(1.1246);">E-Mail für</div>
<div class="t" style="left:151.60px;top:905.4px;font-size:15px;line-height:17px;font-weight:bold;color:#333;transform:scaleX(1.1576);">Bestellung</div>
<div style="position:absolute;left:324px;top:885px;width:476px;height:30px;background:#fff;border:1px solid #c9c9c9;border-radius:4px;box-shadow:inset 0 1px 1px rgba(0,0,0,.05)"></div>
<div style="position:absolute;left:780px;top:886px;width:21px;height:11px;background:#f1f1f1"></div>
<svg style="position:absolute;left:787px;top:887px" width="8" height="10"><path d="M0,4 L4,0 L8,4Z" fill="#a3a3a3"/><path d="M0,6 L8,6 L4,10Z" fill="#333"/></svg>
<div style="position:absolute;left:779px;top:897px;width:21px;height:18px;background:#dcdcdc"></div>
<svg style="position:absolute;left:788px;top:903px" width="11" height="11"><path d="M1,10 L10,1 M5.5,10 L10,5.5" stroke="#555" stroke-width="1.1"/></svg>
<div class="t" style="left:340.50px;top:893.5px;font-size:14.5px;line-height:16px;font-weight:normal;color:#666;transform:scaleX(1.2195);">info@akeon.de</div>
<div class="t" style="left:151.60px;top:936.9px;font-size:15px;line-height:17px;font-weight:bold;color:#333;transform:scaleX(1.1515);">Fax für</div>
<div class="t" style="left:151.60px;top:957px;font-size:15px;line-height:17px;font-weight:bold;color:#333;transform:scaleX(1.1600);">Rechnungen</div>
<div style="position:absolute;left:324px;top:936px;width:476px;height:30px;background:#fff;border:1px solid #c9c9c9;border-radius:4px;box-shadow:inset 0 1px 1px rgba(0,0,0,.05)"></div>
<div class="t" style="left:330.00px;top:944.5px;font-size:14.5px;line-height:16px;font-weight:normal;color:#666;transform:scaleX(1.1938);">0711 4808819</div>
<div class="t" style="left:151.60px;top:988.7px;font-size:15px;line-height:17px;font-weight:bold;color:#333;transform:scaleX(1.1515);">Fax für</div>
<div class="t" style="left:151.60px;top:1008.8px;font-size:15px;line-height:17px;font-weight:bold;color:#333;transform:scaleX(1.1614);">Bestellungen</div>
<div style="position:absolute;left:324px;top:988px;width:476px;height:30px;background:#fff;border:1px solid #c9c9c9;border-radius:4px;box-shadow:inset 0 1px 1px rgba(0,0,0,.05)"></div>
<div class="t" style="left:330.00px;top:996.5px;font-size:14.5px;line-height:16px;font-weight:normal;color:#666;transform:scaleX(1.1938);">0711 4808819</div>
<div class="t" style="left:151.60px;top:1039.6px;font-size:15px;line-height:17px;font-weight:bold;color:#333;transform:scaleX(1.1759);">Versandvorschrift</div>
<div style="position:absolute;left:324px;top:1040px;width:476px;height:97px;background:#fff;border:1px solid #c9c9c9;border-radius:4px;box-shadow:inset 0 1px 1px rgba(0,0,0,.05)"></div>
<svg style="position:absolute;left:788px;top:1125px" width="11" height="11"><path d="M1,10 L10,1 M5.5,10 L10,5.5" stroke="#555" stroke-width="1.1"/></svg>
<div class="t" style="left:340.50px;top:1048px;font-size:14.5px;line-height:16px;font-weight:normal;color:#666;transform:scaleX(1.1837);">Express</div>
<div style="position:absolute;left:140px;top:1253px;width:672px;height:465px;border:1px solid #c4c4c4;box-shadow:0 0 0 0.5px #d8d8d8"></div>
<div style="position:absolute;left:150px;top:1250px;width:70px;height:7px;background:#f8f8f8"></div>
<div class="t" style="left:157.00px;top:1243.2px;font-size:18.5px;line-height:21px;font-weight:bold;color:#2f76c6;transform:scaleX(1.0889);">Labor</div>
<div class="t" style="left:171.00px;top:1276px;font-size:15px;line-height:17px;font-weight:bold;color:#333;transform:scaleX(1.1432);">Anzahl</div>
<div class="t" style="left:171.00px;top:1297px;font-size:15px;line-height:17px;font-weight:bold;color:#333;transform:scaleX(1.1818);">kostenlose</div>
<div class="t" style="left:171.00px;top:1317px;font-size:15px;line-height:17px;font-weight:bold;color:#333;transform:scaleX(1.1663);">Untersuchungen</div>
<div class="t" style="left:171.00px;top:1337px;font-size:15px;line-height:17px;font-weight:bold;color:#333;transform:scaleX(1.1450);">/ Jahr</div>
<div style="position:absolute;left:334px;top:1276px;width:203px;height:30px;background:#fff;border:1px solid #c9c9c9;border-radius:4px;box-shadow:inset 0 1px 1px rgba(0,0,0,.05)"></div>
<div class="t" style="left:339.70px;top:1284.5px;font-size:14.5px;line-height:16px;font-weight:normal;color:#666;transform:scaleX(1.1698);">4</div>
<div class="t" style="left:171.00px;top:1368px;font-size:15px;line-height:17px;font-weight:bold;color:#333;transform:scaleX(1.1219);">E-Mail Labor</div>
<svg style="position:absolute;left:278px;top:1371px" width="21" height="13" viewBox="0 0 21 13">
<rect x="0.5" y="0.5" width="20" height="12" fill="#d6e6f7" stroke="#6aa2dc"/><path d="M0.5,0.5 L10.5,7.5 L20.5,0.5" fill="none" stroke="#6aa2dc"/></svg>
<div style="position:absolute;left:334px;top:1368px;width:447px;height:30px;background:#fff;border:1px solid #c9c9c9;border-radius:4px;box-shadow:inset 0 1px 1px rgba(0,0,0,.05)"></div>
<div class="t" style="left:339.70px;top:1376.5px;font-size:14.5px;line-height:16px;font-weight:normal;color:#666;transform:scaleX(1.2206);">mustermann@mustermann-ag.de</div>
<div class="t" style="left:171.00px;top:1412.6px;font-size:15px;line-height:17px;font-weight:bold;color:#333;transform:scaleX(1.1040);">E-Mail CC Labor</div>
<div style="position:absolute;left:334px;top:1413px;width:447px;height:29px;background:#fff;border:1px solid #c9c9c9;border-radius:4px;box-shadow:inset 0 1px 1px rgba(0,0,0,.05)"></div>
<div class="t" style="left:171.00px;top:1457.4px;font-size:15px;line-height:17px;font-weight:bold;color:#333;transform:scaleX(1.1693);">Laborkonditionen</div>
<div style="position:absolute;left:334px;top:1457px;width:447px;height:51px;background:#fff;border:1px solid #c9c9c9;border-radius:4px;box-shadow:inset 0 1px 1px rgba(0,0,0,.05)"></div>
<svg style="position:absolute;left:769px;top:1496px" width="11" height="11"><path d="M1,10 L10,1 M5.5,10 L10,5.5" stroke="#555" stroke-width="1.1"/></svg>
<div class="t" style="left:350.00px;top:1466.4px;font-size:14.5px;line-height:16px;font-weight:normal;color:#666;transform:scaleX(1.1779);">Herr Janschu</div>
<div class="t" style="left:171.00px;top:1528.3px;font-size:15px;line-height:17px;font-weight:bold;color:#333;transform:scaleX(1.1660);">Untersuch.kosten</div>
<div class="t" style="left:171.00px;top:1547.7px;font-size:15px;line-height:17px;font-weight:bold;color:#333;transform:scaleX(1.0528);">Öl</div>
<div style="position:absolute;left:334px;top:1528px;width:203px;height:31px;background:#fff;border:1px solid #c9c9c9;border-radius:4px;box-shadow:inset 0 1px 1px rgba(0,0,0,.05)"></div>
<div class="t" style="left:339.90px;top:1536.5px;font-size:14.5px;line-height:16px;font-weight:normal;color:#666;transform:scaleX(1.1756);">0,00</div>
<div class="t" style="left:171.00px;top:1580px;font-size:15px;line-height:17px;font-weight:bold;color:#333;transform:scaleX(1.1660);">Untersuch.kosten</div>
<div class="t" style="left:171.00px;top:1600px;font-size:15px;line-height:17px;font-weight:bold;color:#333;transform:scaleX(1.1515);">Polymer</div>
<div style="position:absolute;left:334px;top:1579px;width:203px;height:31px;background:#fff;border:1px solid #c9c9c9;border-radius:4px;box-shadow:inset 0 1px 1px rgba(0,0,0,.05)"></div>
<div class="t" style="left:339.90px;top:1587.5px;font-size:14.5px;line-height:16px;font-weight:normal;color:#666;transform:scaleX(1.1756);">0,00</div>
<div class="t" style="left:171.00px;top:1631.7px;font-size:15px;line-height:17px;font-weight:bold;color:#333;transform:scaleX(1.1660);">Untersuch.kosten</div>
<div class="t" style="left:171.00px;top:1651.7px;font-size:15px;line-height:17px;font-weight:bold;color:#333;transform:scaleX(1.1700);">Sonderuntersuchung</div>
<div style="position:absolute;left:334px;top:1631px;width:203px;height:31px;background:#fff;border:1px solid #c9c9c9;border-radius:4px;box-shadow:inset 0 1px 1px rgba(0,0,0,.05)"></div>
<div class="t" style="left:339.90px;top:1639.5px;font-size:14.5px;line-height:16px;font-weight:normal;color:#666;transform:scaleX(1.1756);">0,00</div>
<div style="position:absolute;left:858px;top:669.4px;width:673px;height:275.6px;border:1px solid #c4c4c4;box-shadow:0 0 0 0.5px #d8d8d8"></div>
<div style="position:absolute;left:868.6px;top:666.4px;width:179.80000000000007px;height:7.0px;background:#f8f8f8"></div>
<div class="t" style="left:875.60px;top:659.2px;font-size:18.5px;line-height:21px;font-weight:bold;color:#2f76c6;transform:scaleX(1.1359);">Bankverbindung</div>
<div class="t" style="left:889.50px;top:692px;font-size:15px;line-height:17px;font-weight:bold;color:#333;transform:scaleX(1.1291);">Bank</div>
<div style="position:absolute;left:1053px;top:692px;width:446px;height:29px;background:#fff;border:1px solid #c9c9c9;border-radius:4px;box-shadow:inset 0 1px 1px rgba(0,0,0,.05)"></div>
<div style="position:absolute;left:1479px;top:693px;width:21px;height:11px;background:#f1f1f1"></div>
<svg style="position:absolute;left:1486px;top:694px" width="8" height="10"><path d="M0,4 L4,0 L8,4Z" fill="#a3a3a3"/><path d="M0,6 L8,6 L4,10Z" fill="#333"/></svg>
<div style="position:absolute;left:1478px;top:704px;width:21px;height:17px;background:#dcdcdc"></div>
<svg style="position:absolute;left:1487px;top:709px" width="11" height="11"><path d="M1,10 L10,1 M5.5,10 L10,5.5" stroke="#555" stroke-width="1.1"/></svg>
<div class="t" style="left:1069.00px;top:700.5px;font-size:14.5px;line-height:16px;font-weight:normal;color:#666;transform:scaleX(1.1932);">Talton Bank</div>
<div class="t" style="left:889.50px;top:741px;font-size:15px;line-height:17px;font-weight:bold;color:#333;transform:scaleX(1.0150);">BLZ</div>
<div style="position:absolute;left:1053px;top:740px;width:446px;height:30px;background:#fff;border:1px solid #c9c9c9;border-radius:4px;box-shadow:inset 0 1px 1px rgba(0,0,0,.05)"></div>
<div style="position:absolute;left:1479px;top:741px;width:21px;height:11px;background:#f1f1f1"></div>
<svg style="position:absolute;left:1486px;top:742px" width="8" height="10"><path d="M0,4 L4,0 L8,4Z" fill="#a3a3a3"/><path d="M0,6 L8,6 L4,10Z" fill="#333"/></svg>
<div style="position:absolute;left:1478px;top:752px;width:21px;height:18px;background:#dcdcdc"></div>
<svg style="position:absolute;left:1487px;top:758px" width="11" height="11"><path d="M1,10 L10,1 M5.5,10 L10,5.5" stroke="#555" stroke-width="1.1"/></svg>
<div class="t" style="left:1069.00px;top:748.5px;font-size:14.5px;line-height:16px;font-weight:normal;color:#666;transform:scaleX(1.1752);">Solma900</div>
<div class="t" style="left:889.50px;top:790.3px;font-size:15px;line-height:17px;font-weight:bold;color:#333;transform:scaleX(1.0148);">IBAN</div>
<div style="position:absolute;left:1053px;top:790px;width:446px;height:29px;background:#fff;border:1px solid #c9c9c9;border-radius:4px;box-shadow:inset 0 1px 1px rgba(0,0,0,.05)"></div>
<div style="position:absolute;left:1479px;top:791px;width:21px;height:11px;background:#f1f1f1"></div>
<svg style="position:absolute;left:1486px;top:792px" width="8" height="10"><path d="M0,4 L4,0 L8,4Z" fill="#a3a3a3"/><path d="M0,6 L8,6 L4,10Z" fill="#333"/></svg>
<div style="position:absolute;left:1478px;top:802px;width:21px;height:17px;background:#dcdcdc"></div>
<svg style="position:absolute;left:1487px;top:807px" width="11" height="11"><path d="M1,10 L10,1 M5.5,10 L10,5.5" stroke="#555" stroke-width="1.1"/></svg>
<div class="t" style="left:1069.00px;top:798.5px;font-size:14.5px;line-height:16px;font-weight:normal;color:#666;transform:scaleX(1.1548);">DE965740875096096</div>
<div class="t" style="left:889.50px;top:838.8px;font-size:15px;line-height:17px;font-weight:bold;color:#333;transform:scaleX(1.1380);">Konto</div>
<div style="position:absolute;left:1053px;top:838px;width:446px;height:30px;background:#fff;border:1px solid #c9c9c9;border-radius:4px;box-shadow:inset 0 1px 1px rgba(0,0,0,.05)"></div>
<div style="position:absolute;left:1479px;top:839px;width:21px;height:11px;background:#f1f1f1"></div>
<svg style="position:absolute;left:1486px;top:840px" width="8" height="10"><path d="M0,4 L4,0 L8,4Z" fill="#a3a3a3"/><path d="M0,6 L8,6 L4,10Z" fill="#333"/></svg>
<div style="position:absolute;left:1478px;top:850px;width:21px;height:18px;background:#dcdcdc"></div>
<svg style="position:absolute;left:1487px;top:856px" width="11" height="11"><path d="M1,10 L10,1 M5.5,10 L10,5.5" stroke="#555" stroke-width="1.1"/></svg>
<div class="t" style="left:1069.00px;top:846.5px;font-size:14.5px;line-height:16px;font-weight:normal;color:#666;transform:scaleX(1.1774);">38760657534</div>
<div class="t" style="left:889.50px;top:888.2px;font-size:15px;line-height:17px;font-weight:bold;color:#333;transform:scaleX(1.0131);">SWIFT</div>
<div style="position:absolute;left:1053px;top:888px;width:446px;height:29px;background:#fff;border:1px solid #c9c9c9;border-radius:4px;box-shadow:inset 0 1px 1px rgba(0,0,0,.05)"></div>
<div style="position:absolute;left:1479px;top:889px;width:21px;height:11px;background:#f1f1f1"></div>
<svg style="position:absolute;left:1486px;top:890px" width="8" height="10"><path d="M0,4 L4,0 L8,4Z" fill="#a3a3a3"/><path d="M0,6 L8,6 L4,10Z" fill="#333"/></svg>
<div style="position:absolute;left:1478px;top:900px;width:21px;height:17px;background:#dcdcdc"></div>
<svg style="position:absolute;left:1487px;top:905px" width="11" height="11"><path d="M1,10 L10,1 M5.5,10 L10,5.5" stroke="#555" stroke-width="1.1"/></svg>
<div style="position:absolute;left:858px;top:960.7px;width:673px;height:278.29999999999995px;border:1px solid #c4c4c4;box-shadow:0 0 0 0.5px #d8d8d8"></div>
<div style="position:absolute;left:867.7px;top:957.7px;width:136.79999999999995px;height:7.0px;background:#f8f8f8"></div>
<div class="t" style="left:874.70px;top:949.2px;font-size:18.5px;line-height:21px;font-weight:bold;color:#2f76c6;transform:scaleX(1.1063);">Zusätzliches</div>
<div class="t" style="left:889.50px;top:982.2px;font-size:15px;line-height:17px;font-weight:bold;color:#333;transform:scaleX(1.1576);">Kunde seit</div>
<div style="position:absolute;left:1053px;top:982px;width:446px;height:30px;background:#fff;border:1px solid #c9c9c9;border-radius:4px"></div>
<div style="position:absolute;left:1053px;top:982px;width:50px;height:30px;background:#eee;border:1px solid #c9c9c9;border-radius:4px 0 0 4px"></div>
<div style="position:absolute;left:1449px;top:982px;width:50px;height:30px;background:#eee;border:1px solid #c9c9c9;border-radius:0 4px 4px 0"></div>
<svg style="position:absolute;left:1068px;top:989px" width="19" height="16" viewBox="0 0 19 16">
<rect x="0.5" y="1.5" width="18" height="14.5" rx="1.5" fill="#444"/><rect x="0.5" y="4" width="18" height="1.2" fill="#eee"/>
<rect x="2.2" y="6.4" width="1.6" height="1.8" fill="#999"/><rect x="5.2" y="6.4" width="1.6" height="1.8" fill="#999"/><rect x="8.2" y="6.4" width="1.6" height="1.8" fill="#999"/><rect x="11.2" y="6.4" width="1.6" height="1.8" fill="#999"/><rect x="14.2" y="6.4" width="1.6" height="1.8" fill="#999"/><rect x="2.2" y="9.4" width="1.6" height="1.8" fill="#999"/><rect x="5.2" y="9.4" width="1.6" height="1.8" fill="#999"/><rect x="8.2" y="9.4" width="1.6" height="1.8" fill="#999"/><rect x="11.2" y="9.4" width="1.6" height="1.8" fill="#999"/><rect x="14.2" y="9.4" width="1.6" height="1.8" fill="#999"/><rect x="2.2" y="12.4" width="1.6" height="1.8" fill="#999"/><rect x="5.2" y="12.4" width="1.6" height="1.8" fill="#999"/><rect x="8.2" y="12.4" width="1.6" height="1.8" fill="#999"/><rect x="11.2" y="12.4" width="1.6" height="1.8" fill="#999"/><rect x="14.2" y="12.4" width="1.6" height="1.8" fill="#999"/></svg>
<svg style="position:absolute;left:1466px;top:990px" width="16" height="14"><path d="M2,1.5 L14,12.5 M14,1.5 L2,12.5" stroke="#333" stroke-width="3.4"/></svg>
<div class="t" style="left:1110.80px;top:991px;font-size:14.5px;line-height:16px;font-weight:normal;color:#666;transform:scaleX(1.1790);">13.07.2015</div>
<div class="t" style="left:889.50px;top:1021.7px;font-size:15px;line-height:17px;font-weight:bold;color:#333;transform:scaleX(1.1704);">Von</div>
<div class="t" style="left:889.50px;top:1041.7px;font-size:15px;line-height:17px;font-weight:bold;color:#333;transform:scaleX(1.1795);">Dublettenabgleich</div>
<div class="t" style="left:889.50px;top:1061.8px;font-size:15px;line-height:17px;font-weight:bold;color:#333;transform:scaleX(1.1807);">ausschließen:</div>
<div style="position:absolute;left:1052.0px;top:1028.0px;width:12px;height:10.5px;background:linear-gradient(#f0f0f0,#dcdcdc);border:1px solid #a9a9a9;border-radius:2.5px"></div>
<div class="t" style="left:889.50px;top:1092.7px;font-size:15px;line-height:17px;font-weight:bold;color:#333;transform:scaleX(1.1615);">Direktkunde:</div>
<div style="position:absolute;left:1052.0px;top:1098.3px;width:12px;height:10.5px;background:linear-gradient(#f0f0f0,#dcdcdc);border:1px solid #a9a9a9;border-radius:2.5px"></div>
<svg style="position:absolute;left:1054.0px;top:1100.3px" width="11" height="9"><path d="M1,4.5 L4,7.5 L10,1.5" fill="none" stroke="#333" stroke-width="2.2"/></svg>
<div class="t" style="left:889.50px;top:1123.5px;font-size:15px;line-height:17px;font-weight:bold;color:#333;transform:scaleX(1.1654);">Inaktiv</div>
<div style="position:absolute;left:1052.8px;top:1129.0px;width:12.5px;height:11px;background:#e3e3e3;border:1px solid #b0b0b0;border-radius:50%"></div>
<div class="t" style="left:1077.14px;top:1126px;font-size:15px;line-height:17px;font-weight:bold;color:#333;transform:scaleX(1.1320);">ja</div>
<div style="position:absolute;left:1101.0px;top:1129.0px;width:12.5px;height:11px;background:#f4f4f4;border:1px solid #b0b0b0;border-radius:50%"></div>
<div style="position:absolute;left:1105.0px;top:1132.3px;width:6.5px;height:6px;background:#555;border-radius:50%"></div>
<div class="t" style="left:1124.70px;top:1126px;font-size:15px;line-height:17px;font-weight:bold;color:#333;transform:scaleX(1.1784);">nein</div>
<div class="t" style="left:889.50px;top:1159px;font-size:15px;line-height:17px;font-weight:bold;color:#333;transform:scaleX(1.1802);">effektive</div>
<div class="t" style="left:889.50px;top:1179px;font-size:15px;line-height:17px;font-weight:bold;color:#333;transform:scaleX(1.1605);">Füllmenge</div>
<div class="t" style="left:889.50px;top:1199px;font-size:15px;line-height:17px;font-weight:bold;color:#333;transform:scaleX(1.1542);">berücksichtigen:</div>
<div style="position:absolute;left:1052.0px;top:1165.3px;width:12px;height:10.5px;background:linear-gradient(#f0f0f0,#dcdcdc);border:1px solid #a9a9a9;border-radius:2.5px"></div>
<div style="position:absolute;left:1577px;top:669.7px;width:672px;height:286.29999999999995px;border:1px solid #c4c4c4;box-shadow:0 0 0 0.5px #d8d8d8"></div>
<div style="position:absolute;left:1587px;top:666.7px;width:156px;height:7.0px;background:#f8f8f8"></div>
<div class="t" style="left:1594.00px;top:659px;font-size:18.5px;line-height:21px;font-weight:bold;color:#2f76c6;transform:scaleX(1.1422);">Anmerkungen</div>
<div class="t" style="left:1608.00px;top:692.5px;font-size:15px;line-height:17px;font-weight:bold;color:#333;transform:scaleX(1.1638);">Schlagwörter:</div>
<div style="position:absolute;left:1772px;top:692px;width:446px;height:29px;background:#fff;border:1px solid #c9c9c9;border-radius:4px;box-shadow:inset 0 1px 1px rgba(0,0,0,.05)"></div>
<div style="position:absolute;left:2198px;top:693px;width:21px;height:11px;background:#f1f1f1"></div>
<svg style="position:absolute;left:2205px;top:694px" width="8" height="10"><path d="M0,4 L4,0 L8,4Z" fill="#a3a3a3"/><path d="M0,6 L8,6 L4,10Z" fill="#333"/></svg>
<div style="position:absolute;left:2197px;top:704px;width:21px;height:17px;background:#dcdcdc"></div>
<svg style="position:absolute;left:2206px;top:709px" width="11" height="11"><path d="M1,10 L10,1 M5.5,10 L10,5.5" stroke="#555" stroke-width="1.1"/></svg>
<div class="t" style="left:1608.00px;top:740.8px;font-size:15px;line-height:17px;font-weight:bold;color:#333;transform:scaleX(1.1610);">Bemerkung:</div>
<div style="position:absolute;left:1772px;top:740px;width:446px;height:85px;background:#fff;border:1px solid #c9c9c9;border-radius:4px;box-shadow:inset 0 1px 1px rgba(0,0,0,.05)"></div>
<svg style="position:absolute;left:2206px;top:813px" width="11" height="11"><path d="M1,10 L10,1 M5.5,10 L10,5.5" stroke="#555" stroke-width="1.1"/></svg>
<div class="t" style="left:1608.00px;top:844.9px;font-size:15px;line-height:17px;font-weight:bold;color:#333;transform:scaleX(1.1554);">Achtung!:</div>
<div style="position:absolute;left:1608px;top:861px;width:75px;height:1.2999999999999545px;background:#333"></div>
<div style="position:absolute;left:1772px;top:844px;width:446px;height:84px;background:#fff;border:1px solid #c9c9c9;border-radius:4px;box-shadow:inset 0 1px 1px rgba(0,0,0,.05)"></div>
<svg style="position:absolute;left:2206px;top:916px" width="11" height="11"><path d="M1,10 L10,1 M5.5,10 L10,5.5" stroke="#555" stroke-width="1.1"/></svg>
<div style="position:absolute;left:1577px;top:970.8px;width:672px;height:202.79999999999995px;border:1px solid #c4c4c4;box-shadow:0 0 0 0.5px #d8d8d8"></div>
<div style="position:absolute;left:1587px;top:967.8px;width:89px;height:7.0px;background:#f8f8f8"></div>
<div class="t" style="left:1594.00px;top:960.1px;font-size:18.5px;line-height:21px;font-weight:bold;color:#2f76c6;transform:scaleX(1.1388);">Umsatz</div>
<div class="t" style="left:1608.00px;top:993.6px;font-size:15px;line-height:17px;font-weight:bold;color:#333;transform:scaleX(1.2029);">Umsatzpotential</div>
<div style="position:absolute;left:1772px;top:993px;width:202px;height:31px;background:#fff;border:1px solid #c9c9c9;border-radius:4px;box-shadow:inset 0 1px 1px rgba(0,0,0,.05)"></div>
<div class="t" style="left:1936.76px;top:1001.5px;font-size:14.5px;line-height:16px;font-weight:normal;color:#666;transform:scaleX(1.1756);">0,00</div>
<div class="t" style="left:1608.00px;top:1038px;font-size:15px;line-height:17px;font-weight:bold;color:#333;transform:scaleX(1.1654);">Umsatzplanung</div>
<div style="position:absolute;left:1772px;top:1038px;width:202px;height:30px;background:#fff;border:1px solid #c9c9c9;border-radius:4px;box-shadow:inset 0 1px 1px rgba(0,0,0,.05)"></div>
<div class="t" style="left:1936.76px;top:1046.5px;font-size:14.5px;line-height:16px;font-weight:normal;color:#666;transform:scaleX(1.1756);">0,00</div>
<div class="t" style="left:1608.00px;top:1083.8px;font-size:15px;line-height:17px;font-weight:bold;color:#333;transform:scaleX(1.1753);">Tatsächlicher</div>
<div class="t" style="left:1608.00px;top:1103.8px;font-size:15px;line-height:17px;font-weight:bold;color:#333;transform:scaleX(1.1458);">Umsatz</div>
<div style="position:absolute;left:1772px;top:1083px;width:202px;height:30px;background:#eee;border:1px solid #c9c9c9;border-radius:4px;box-shadow:inset 0 1px 1px rgba(0,0,0,.05)"></div>
<div class="t" style="left:1777.50px;top:1091.5px;font-size:14.5px;line-height:16px;font-weight:normal;color:#666;transform:scaleX(1.1336);">379.636,91 EUR</div>
<div class="t" style="left:1608.00px;top:1134px;font-size:15px;line-height:17px;font-weight:bold;color:#333;transform:scaleX(1.1437);">Jahresvereinbarung</div>
<div style="position:absolute;left:1771.7px;top:1140.0px;width:12px;height:10.5px;background:linear-gradient(#f0f0f0,#dcdcdc);border:1px solid #a9a9a9;border-radius:2.5px"></div>
</body></html>
